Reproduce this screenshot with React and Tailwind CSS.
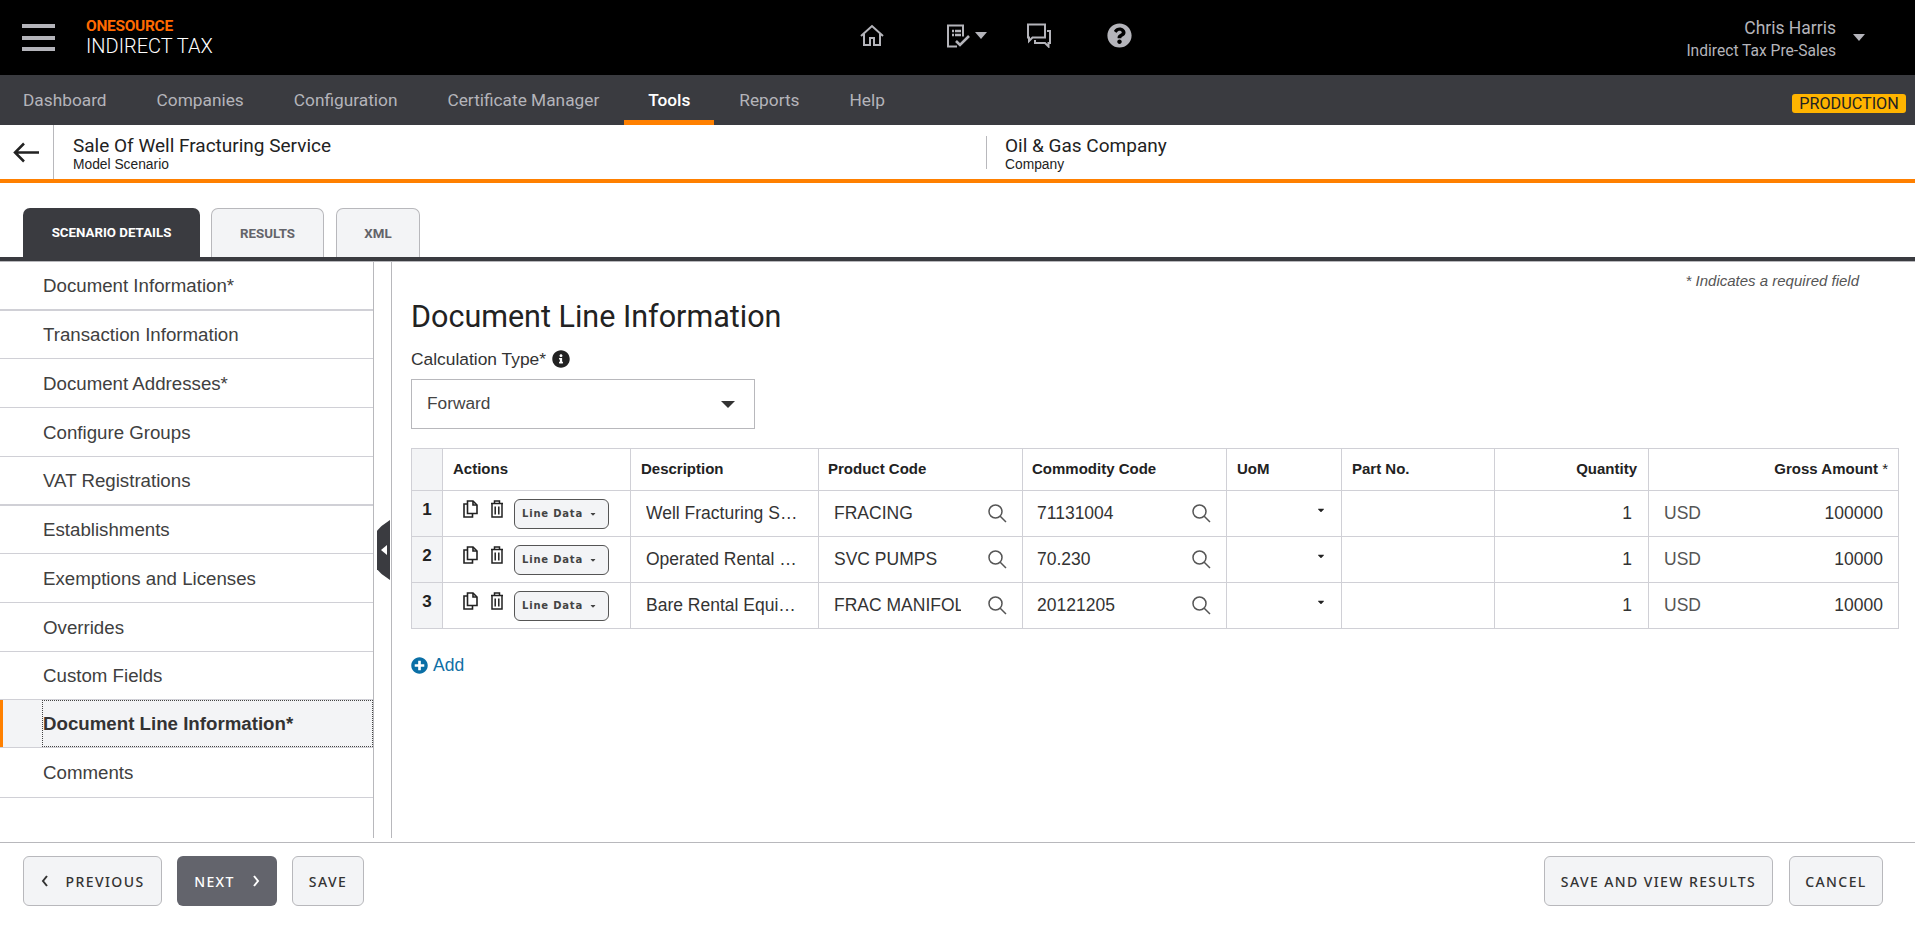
import { FaCaretDown, FaInfoCircle, FaPlusCircle, FaQuestionCircle } from "react-icons/fa";

const navItems = ["Dashboard", "Companies", "Configuration", "Certificate Manager", "Tools", "Reports", "Help"];

const sideItems = [
    { label: "Document Information*", thick: true, h: "h-[49px]" },
    { label: "Transaction Information", h: "h-[48px]" },
    { label: "Document Addresses*", h: "h-[49px]" },
    { label: "Configure Groups", h: "h-[49px]" },
    { label: "VAT Registrations", thick: true, h: "h-[49px]" },
    { label: "Establishments", h: "h-[48px]" },
    { label: "Exemptions and Licenses", h: "h-[49px]" },
    { label: "Overrides", h: "h-[49px]" },
    { label: "Custom Fields", h: "h-[48px]" },
    { label: "Document Line Information*", active: true, h: "h-[48px]" },
    { label: "Comments", h: "h-[50px]" },
];

const lines = [
    { n: 1, desc: "Well Fracturing Service", product: "FRACING", commodity: "71131004", amount: "100000" },
    { n: 2, desc: "Operated Rental Equipment", product: "SVC PUMPS", commodity: "70.230", amount: "10000" },
    { n: 3, desc: "Bare Rental Equipment", product: "FRAC MANIFOLD", commodity: "20121205", amount: "10000" },
];

const HomeIcon = () => (
    <svg width="24" height="24" viewBox="0 0 24 24" fill="none" stroke="#b4b4ba" strokeWidth="2">
        <path d="M1 12 12 2l11 10M4 10v11h6v-7h4v7h6V10" />
    </svg>
);

const TasksIcon = () => (
    <svg width="25" height="24" viewBox="0 0 25 24" fill="none" stroke="#b4b4ba" strokeWidth="2">
        <path d="M11 22.500H2V1.500h15v11" />
        <path d="M6 7h9M6 11h9" strokeWidth="2.500" strokeDasharray="2 1 7 0" />
        <path d="M10 17l4 4 9-9" strokeWidth="2.600" />
    </svg>
);

const ChatIcon = () => (
    <svg width="25" height="25" viewBox="0 0 25 25" fill="none" stroke="#b4b4ba" strokeWidth="2">
        <path d="M2 1.500h17v13H6.500L3 18v-3.500H2z" />
        <path d="M21 8h3v12h-1.500v3.500L19 20H9v-3" />
    </svg>
);

const CopyIcon = () => (
    <svg width="15" height="18" viewBox="0 0 15 18" fill="none" stroke="#222" strokeWidth="1.600" className="mt-[1px]">
        <path d="M4.500 13.500V1h5.500l4 4v8.500z" fill="#fff" />
        <path d="M10 1v4h4" />
        <path d="M4.500 4H1v13h8.500v-3.500" />
    </svg>
);

const TrashIcon = () => (
    <svg width="14" height="18" viewBox="0 0 14 18" fill="none" stroke="#222" strokeWidth="1.500" className="mt-[1px]">
        <path d="M1 3.500h12M4.500 3.500V1h5v2.500" />
        <path d="M2 3.500V17h10V3.500" />
        <path d="M5.200 6.500v8M8.800 6.500v8" />
    </svg>
);

const SearchIcon = () => (
    <svg width="19" height="19" viewBox="0 0 19 19" fill="none" stroke="#555" strokeWidth="1.500" className="shrink-0">
        <circle cx="7.500" cy="7.500" r="6.500" />
        <path d="M12.200 12.200 18 18" />
    </svg>
);

const TopBar = () => (
    <div className="flex h-[75px] items-center bg-black pl-[22px] pr-[50px]">
        <div className="flex h-[27px] w-[33px] flex-col justify-between">
            <div className="h-[4px] bg-[#b4b4ba]" />
            <div className="h-[4px] bg-[#b4b4ba]" />
            <div className="h-[4px] bg-[#b4b4ba]" />
        </div>
        <div className="ml-[31px] w-[200px] font-['Roboto',sans-serif]">
            <div className="pt-[2px] text-[15.500px] font-bold leading-[15px] tracking-[-0.300px] text-[#ff6a00]">ONESOURCE</div>
            <div className="text-[20px] font-light leading-[24px] text-white">INDIRECT TAX</div>
        </div>
        <div className="mb-[4px] ml-[574px] flex items-center text-[#b4b4ba]">
            <HomeIcon />
            <div className="ml-[62px] flex items-center">
                <TasksIcon />
                <div className="ml-[4px] h-0 w-0 border-x-[6px] border-t-[7px] border-x-transparent border-t-[#b4b4ba]" />
            </div>
            <div className="ml-[39px]"><ChatIcon /></div>
            <div className="ml-[56px]"><FaQuestionCircle size={25} /></div>
        </div>
        <div className="ml-auto text-right font-['Roboto',sans-serif] text-[#b4b4ba]">
            <div className="text-[17.500px] leading-[26px]">Chris Harris</div>
            <div className="text-[15.600px] leading-[20px]">Indirect Tax Pre-Sales</div>
        </div>
        <div className="ml-[17px] h-0 w-0 border-x-[6px] border-t-[7px] border-x-transparent border-t-[#b4b4ba]" />
    </div>
);

const NavBar = () => (
    <div className="flex h-[50px] items-stretch bg-[#3a3b40] pr-[9px] font-['Roboto',sans-serif] text-[17.300px]">
        {navItems.map((item) =>
            item === "Tools" ? (
                <div
                    key={item}
                    className="flex w-[90px] items-center justify-center border-b-[5px] border-[#ff8000] pt-[6px] font-medium text-white"
                >
                    {item}
                </div>
            ) : (
                <div key={item} className="flex items-center px-[25px] pt-[1px] first:pl-[23px] text-[#b4b4ba]">
                    {item}
                </div>
            )
        )}
        <div className="ml-auto mt-[19px] flex h-[19px] w-[114px] items-center justify-center rounded-[3px] bg-[#ffb400] pt-[1px] text-[16.200px] text-[#222]">
            PRODUCTION
        </div>
    </div>
);

const SubHeader = () => (
    <div className="flex h-[58px] border-b-[4px] border-[#ff8000]">
        <div className="flex w-[54px] shrink-0 items-center justify-center border-r border-[#b8b8bc]">
            <svg width="27" height="21" viewBox="0 0 27 21" fill="none" stroke="#222" strokeWidth="2.500">
                <path d="M26 10.500H2M11 1.500l-9 9 9 9" />
            </svg>
        </div>
        <div className="w-[932px] pl-[19px] pt-[9px]">
            <div className="font-['Roboto',sans-serif] text-[19px] leading-[24px] text-[#222]">Sale Of Well Fracturing Service</div>
            <div className="font-['Liberation_Sans',sans-serif] text-[13.800px] leading-[13px] text-[#222]">Model Scenario</div>
        </div>
        <div className="mt-[11px] h-[33px] border-l border-[#b8b8bc] pl-[18px]">
            <div className="mt-[-2px] font-['Roboto',sans-serif] text-[19px] leading-[24px] text-[#222]">Oil &amp; Gas Company</div>
            <div className="font-['Liberation_Sans',sans-serif] text-[13.800px] leading-[13px] text-[#222]">Company</div>
        </div>
    </div>
);

const Tabs = () => (
    <div className="flex h-[78px] items-end gap-[11px] border-b-[4px] border-[#3a3b40] pl-[23px] font-['Roboto',sans-serif] text-[13.300px] font-bold">
        <div className="flex h-[49px] w-[177px] items-center justify-center rounded-t-[7px] bg-[#3a3b40] pt-[1px] text-white">SCENARIO DETAILS</div>
        <div className="flex h-[49px] w-[113px] items-center justify-center rounded-t-[7px] border border-b-0 border-[#b8b8bc] bg-[#f3f4f6] pt-[1px] text-[#63646a]">RESULTS</div>
        <div className="ml-[1px] flex h-[49px] w-[84px] items-center justify-center rounded-t-[7px] border border-b-0 border-[#b8b8bc] bg-[#f3f4f6] pt-[1px] text-[#63646a]">XML</div>
    </div>
);

const Sidebar = () => (
    <div className="h-[576px] w-[374px] shrink-0 border-r border-[#b8b8bc] font-['Liberation_Sans',sans-serif] text-[18.700px]">
        {sideItems.map((item) =>
            item.active ? (
                <div key={item.label} className={`${item.h} flex border-b border-[#d0d0d6] bg-[#f3f4f6]`}>
                    <div className="w-[3px] bg-[#ff8000]" />
                    <div className="ml-[39px] flex flex-1 items-center border border-dotted border-[#444] pt-[2px] font-bold text-[#333]">
                        {item.label}
                    </div>
                </div>
            ) : (
                <div
                    key={item.label}
                    className={`${item.h} flex items-center border-[#d0d0d6] pl-[43px] pt-[2px] text-[#404040] ${item.thick ? "border-b-2" : "border-b"}`}
                >
                    {item.label}
                </div>
            )
        )}
    </div>
);

const LineTable = () => (
    <table className="w-[1487px] table-fixed border-collapse font-['Liberation_Sans',sans-serif]">
        <colgroup>
            <col className="w-[31px]" />
            <col className="w-[188px]" />
            <col className="w-[188px]" />
            <col className="w-[204px]" />
            <col className="w-[204px]" />
            <col className="w-[115px]" />
            <col className="w-[153px]" />
            <col className="w-[154px]" />
            <col className="w-[250px]" />
        </colgroup>
        <thead>
            <tr className="h-[42px] text-left text-[15px] font-bold text-[#222]">
                <th className="border border-[#d0d0d6] bg-[#f3f4f6]" />
                <th className="border border-[#d0d0d6] pl-[10px]">Actions</th>
                <th className="border border-[#d0d0d6] pl-[10px]">Description</th>
                <th className="border border-[#d0d0d6] pl-[9px]">Product Code</th>
                <th className="border border-[#d0d0d6] pl-[9px]">Commodity Code</th>
                <th className="border border-[#d0d0d6] pl-[10px]">UoM</th>
                <th className="border border-[#d0d0d6] pl-[10px]">Part No.</th>
                <th className="border border-[#d0d0d6] pr-[11px] text-right">Quantity</th>
                <th className="border border-[#d0d0d6] pr-[10px] text-right">Gross Amount <span className="font-normal">*</span></th>
            </tr>
        </thead>
        <tbody>
            {lines.map((line) => (
                <tr key={line.n} className="h-[46px] text-[17.500px] text-[#333]">
                    <td className="border border-[#d0d0d6] bg-[#f3f4f6] pb-[7px] text-center text-[17px] font-bold text-[#222]">{line.n}</td>
                    <td className="border border-[#d0d0d6]">
                        <div className="flex items-start pl-[20px]">
                            <CopyIcon />
                            <div className="ml-[12px]"><TrashIcon /></div>
                            <div className="ml-[10px] flex h-[30px] w-[95px] items-center rounded-[6px] border border-[#555] bg-[#f3f4f6] pl-[7px] font-['DejaVu_Sans',sans-serif] text-[10px] font-bold tracking-[0.800px] text-[#444]">
                                Line Data
                                <FaCaretDown size={8} className="ml-[6px]" />
                            </div>
                        </div>
                    </td>
                    <td className="border border-[#d0d0d6] pl-[15px] pr-[18px]">
                        <div className="truncate">{line.desc}</div>
                    </td>
                    <td className="border border-[#d0d0d6] px-[15px]">
                        <div className="flex items-center">
                            <div className="w-[127px] overflow-hidden whitespace-nowrap">{line.product}</div>
                            <div className="ml-auto"><SearchIcon /></div>
                        </div>
                    </td>
                    <td className="border border-[#d0d0d6] pl-[14px] pr-[15px]">
                        <div className="flex items-center">
                            <div>{line.commodity}</div>
                            <div className="ml-auto"><SearchIcon /></div>
                        </div>
                    </td>
                    <td className="border border-[#d0d0d6] pb-[7px] pr-[15px]">
                        <div className="flex justify-end text-[#222]"><FaCaretDown size={10} /></div>
                    </td>
                    <td className="border border-[#d0d0d6]" />
                    <td className="border border-[#d0d0d6] pr-[16px] text-right">1</td>
                    <td className="border border-[#d0d0d6] px-[15px]">
                        <div className="flex justify-between">
                            <span className="text-[#555]">USD</span>
                            <span>{line.amount}</span>
                        </div>
                    </td>
                </tr>
            ))}
        </tbody>
    </table>
);

const MainPanel = () => (
    <div className="ml-[17px] h-[576px] flex-1 border-l border-[#b8b8bc] pl-[19px] font-['Liberation_Sans',sans-serif]">
        <div className="pr-[56px] pt-[11px] text-right text-[15px] italic leading-[16px] text-[#555]">* Indicates a required field</div>
        <h1 className="mt-[8px] font-['Roboto',sans-serif] text-[30.500px] leading-[40px] text-[#222]">Document Line Information</h1>
        <div className="mt-[12px] flex items-center text-[17.400px] leading-[20px] text-[#333]">
            Calculation Type*
            <FaInfoCircle size={18} className="ml-[6px] text-[#222]" />
        </div>
        <div className="mt-[10px] flex h-[50px] w-[344px] items-center justify-between border border-[#b8b8bc] pl-[15px] pr-[19px] text-[17.300px] text-[#444]">
            Forward
            <div className="h-0 w-0 border-x-[7px] border-t-[7px] border-x-transparent border-t-[#333]" />
        </div>
        <div className="mt-[19px]">
            <LineTable />
        </div>
        <div className="mt-[26px] flex items-center text-[17.500px] leading-[20px] text-[#0f6fa5]">
            <FaPlusCircle size={17} className="text-[#0a6fa6]" />
            <span className="ml-[5px]">Add</span>
        </div>
    </div>
);

const FooterButton = ({ children, className }) => (
    <div className={`flex h-[50px] items-center justify-center rounded-[6px] border border-[#b8b8bc] bg-[#f3f4f6] text-[#333] ${className}`}>
        {children}
    </div>
);

const Footer = () => (
    <div className="mt-[4px] flex h-[98px] items-start justify-between border-t border-[#b8b8bc] pl-[23px] pr-[32px] pt-[13px] font-['Noto_Sans',sans-serif] text-[14px] font-medium tracking-[1.400px]">
        <div className="flex gap-[15px]">
            <FooterButton className="w-[139px]">
                <svg width="8" height="12" viewBox="0 0 8 12" fill="none" stroke="#333" strokeWidth="2" className="mr-[17px]"><path d="M6 1 2 6l4 5" /></svg>
                PREVIOUS
            </FooterButton>
            <div className="flex h-[50px] w-[100px] items-center justify-center rounded-[6px] bg-[#63646c] text-white">
                NEXT
                <svg width="8" height="12" viewBox="0 0 8 12" fill="none" stroke="#fff" strokeWidth="2" className="ml-[17px]"><path d="M2 1l4 5-4 5" /></svg>
            </div>
            <FooterButton className="w-[72px]">SAVE</FooterButton>
        </div>
        <div className="flex gap-[16px]">
            <FooterButton className="w-[229px]">SAVE AND VIEW RESULTS</FooterButton>
            <FooterButton className="w-[94px]">CANCEL</FooterButton>
        </div>
    </div>
);

const App = () => {
    return (
        <div className="h-[940px] overflow-hidden bg-white">
            <TopBar />
            <NavBar />
            <SubHeader />
            <Tabs />
            <div className="relative flex border-t border-[#b8b8bc]">
                <Sidebar />
                <MainPanel />
                <div className="absolute left-[377px] top-[258px] flex h-[60px] w-[13px] items-center justify-center bg-[#3a3b40] [clip-path:polygon(100%_0,100%_100%,35%_90%,0_82%,0_18%,35%_10%)]">
                    <div className="h-0 w-0 border-y-[5px] border-r-[6px] border-y-transparent border-r-white" />
                </div>
            </div>
            <Footer />
        </div>
    );
};

export default App;
